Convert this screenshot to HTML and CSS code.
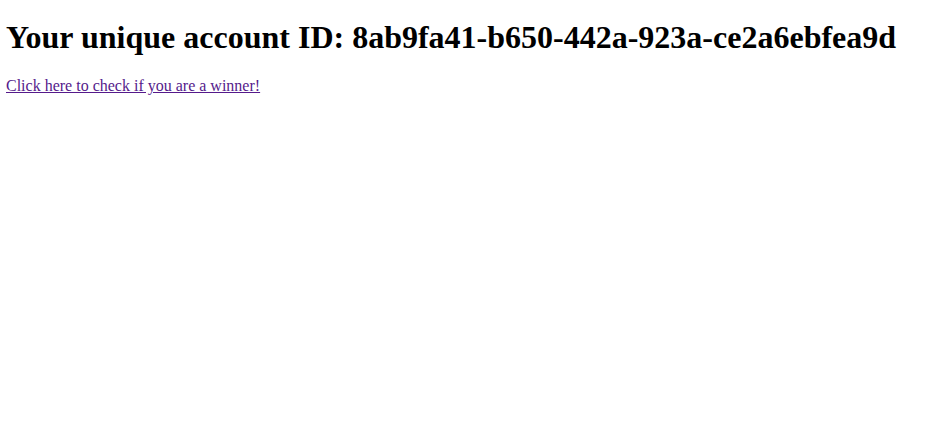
FILE: index.html
```html
<!DOCTYPE html>
<html>
<head>
<meta charset="utf-8">
<link rel="stylesheet" href="styles.css">
</head>
<body class="page">
<h1 class="title">Your unique account ID: 8ab9fa41-b650-442a-923a-ce2a6ebfea9d</h1>
<p class="line"><a class="winner-link" href="#">Click here to check if you are a winner!</a></p>
</body>
</html>
```
FILE: styles.css
```css
.page {
  margin: 6px;
  font-family: "Liberation Serif", "Times New Roman", serif;
  background: #fff;
  color: #000;
}
.title {
  font-size: 32px;
  font-weight: bold;
  margin: 12.5px 0 21.44px;
}
.line {
  font-size: 16px;
  margin: 16px 0;
}
.winner-link {
  color: #551a8b;
  text-decoration: underline;
}
```
